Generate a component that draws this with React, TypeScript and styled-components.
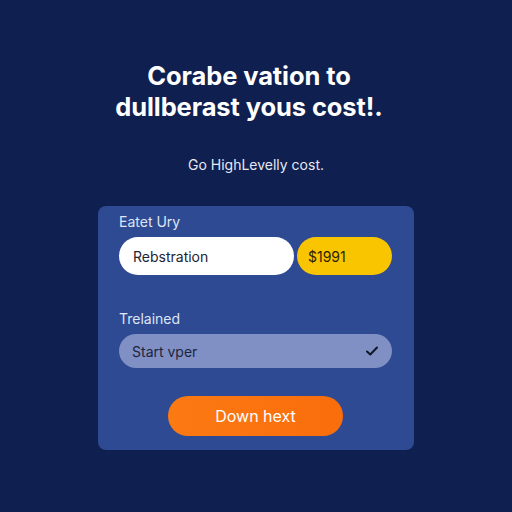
import React from "react";
import styled, {createGlobalStyle} from "styled-components";

const GlobalStyle = createGlobalStyle`
  html, body {
    margin: 0;
    padding: 0;
    background: #0f1f50;
  }
  body {
    font-family: Inter, "Open Sans", sans-serif;
  }
`;

const Page = styled.div`
  width: 512px;
  height: 512px;
  display: flex;
  flex-direction: column;
  align-items: center;
  background: #0f1f50;
  box-sizing: border-box;
  padding-top: 60px;
`;

const Title = styled.h1`
  margin: 0;
  padding-right: 14px;
  font-family: Inter, sans-serif;
  font-weight: 700;
  font-size: 25.5px;
  line-height: 31px;
  color: #ffffff;
  text-align: center;
  letter-spacing: -0.1px;
`;

const Subtitle = styled.p`
  margin: 34px 0 0;
  font-family: Inter, sans-serif;
  font-size: 14px;
  line-height: 18px;
  color: #e6e9f3;
`;

const Card = styled.div`
  margin-top: 32px;
  width: 316px;
  box-sizing: border-box;
  padding: 7px 22px 14px 21px;
  background: #2d4a92;
  border-radius: 8px;
  display: flex;
  flex-direction: column;
`;

const Label = styled.div<{ $top?: number }>`
  margin-top: ${props => props.$top ?? 0}px;
  font-size: 14px;
  line-height: 18px;
  color: #dfe5f5;
`;

const Row = styled.div`
  margin-top: 6px;
  display: flex;
  gap: 3px;
`;

const TextField = styled.div`
  flex: 1;
  height: 38px;
  border-radius: 19px;
  background: #ffffff;
  display: flex;
  align-items: center;
  padding-left: 14px;
  font-size: 14px;
  color: #1d2433;
`;

const PricePill = styled.div`
  width: 95px;
  height: 38px;
  border-radius: 19px;
  background: #f9c400;
  display: flex;
  align-items: center;
  box-sizing: border-box;
  padding-left: 11px;
  font-size: 14px;
  color: #2a2200;
`;

const Select = styled.div`
  margin-top: 6px;
  height: 34px;
  border-radius: 17px;
  background: #8090c5;
  display: flex;
  align-items: center;
  justify-content: space-between;
  padding: 0 14px 0 13px;
  font-size: 14px;
  color: #1d2440;
`;

const Action = styled.button`
  margin: 28px auto 0;
  width: 175px;
  height: 40px;
  border: none;
  border-radius: 20px;
  background: linear-gradient(90deg, #fb7a12 0%, #fa6d0c 100%);
  color: #ffffff;
  font-family: Inter, sans-serif;
  font-size: 16px;
  cursor: pointer;
`;

function Check() {
    return (
        <svg width="12" height="10" viewBox="0 0 12 10">
            <path d="M1 5.5 L4.3 8.5 L11 1.5" fill="none" stroke="#111827" strokeWidth="2" strokeLinecap="round" strokeLinejoin="round"/>
        </svg>
    )
}

export default function App() {
    return (
        <>
            <GlobalStyle/>
            <Page>
                <Title>Corabe vation to<br/>dullberast yous cost!.</Title>
                <Subtitle>Go HighLevelly cost.</Subtitle>
                <Card>
                    <Label>Eatet Ury</Label>
                    <Row>
                        <TextField>Rebstration</TextField>
                        <PricePill>$1991</PricePill>
                    </Row>
                    <Label $top={35}>Trelained</Label>
                    <Select>
                        <span>Start vper</span>
                        <Check/>
                    </Select>
                    <Action>Down hext</Action>
                </Card>
            </Page>
        </>
    )
}
